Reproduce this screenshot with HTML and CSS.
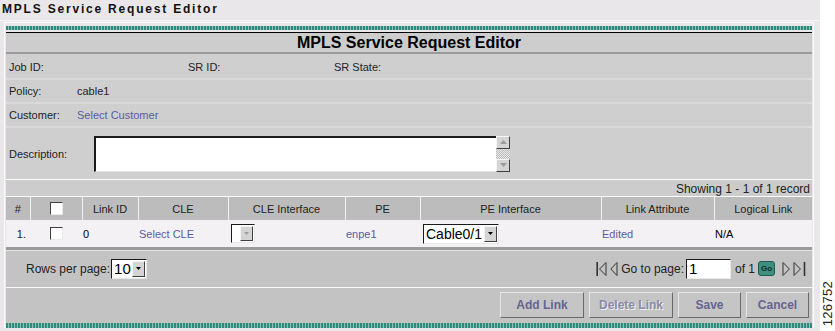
FILE: index.html
```html
<!DOCTYPE html>
<html lang="en">
  <head>
    <meta charset="UTF-8" />
    <title>MPLS Service Request Editor</title>
    <link rel="stylesheet" href="styles.css">
  </head>
  <body>
    <div class="screen">
      <div class="page-title">MPLS Service Request Editor</div>

      <div class="panel">
        <div class="band"></div>
        <div class="panel-head">MPLS Service Request Editor</div>

        <!-- request attributes -->
        <div class="info-row row-job">
          <span class="cell-job">Job ID:</span>
          <span class="cell-sr">SR ID:</span>
          <span class="cell-state">SR State:</span>
        </div>
        <div class="info-row">
          <span class="label">Policy:</span>
          <span>cable1</span>
        </div>
        <div class="info-row">
          <span class="label">Customer:</span>
          <a class="link" href="#">Select Customer</a>
        </div>
        <div class="info-row desc-row">
          <span class="label">Description:</span>
          <div class="textbox">
            <div class="textbox-area"></div>
            <div class="scrollbar">
              <span class="sb-btn">
                <svg width="7" height="4" viewBox="0 0 7 4"><path d="M3.5 0 7 4H0Z" fill="#9a9a9a"/></svg>
              </span>
              <span class="sb-track"></span>
              <span class="sb-btn">
                <svg width="7" height="4" viewBox="0 0 7 4"><path d="M0 0h7L3.5 4Z" fill="#9a9a9a"/></svg>
              </span>
            </div>
          </div>
        </div>

        <div class="showing">Showing 1 - 1 of 1 record</div>

        <!-- links grid -->
        <table class="grid">
          <colgroup>
            <col style="width:24px"><col style="width:52px"><col style="width:56px">
            <col style="width:90px"><col style="width:117px"><col style="width:75px">
            <col style="width:181px"><col style="width:113px"><col style="width:98px">
          </colgroup>
          <thead>
            <tr>
              <th>#</th>
              <th><span class="check"></span></th>
              <th>Link ID</th>
              <th>CLE</th>
              <th>CLE Interface</th>
              <th>PE</th>
              <th>PE Interface</th>
              <th>Link Attribute</th>
              <th>Logical Link</th>
            </tr>
          </thead>
          <tbody>
            <tr>
              <td class="num">1.</td>
              <td class="center"><span class="check"></span></td>
              <td class="plain">0</td>
              <td><a class="link" href="#">Select CLE</a></td>
              <td>
                <span class="select select-off">
                  <span class="select-value"></span>
                  <span class="select-btn"><svg width="5" height="3" viewBox="0 0 5 3"><path d="M0 0h5L2.5 3Z" fill="#a0a0a0"/></svg></span>
                </span>
              </td>
              <td><a class="link" href="#">enpe1</a></td>
              <td>
                <span class="select select-pe">
                  <span class="select-value">Cable0/1</span>
                  <span class="select-btn"><svg width="5" height="3" viewBox="0 0 5 3"><path d="M0 0h5L2.5 3Z" fill="#000"/></svg></span>
                </span>
              </td>
              <td><a class="link" href="#">Edited</a></td>
              <td class="plain">N/A</td>
            </tr>
          </tbody>
        </table>

        <div class="pager">
          <div class="rows-per">
            Rows per page:
            <span class="select select-rows">
              <span class="select-value">10</span>
              <span class="select-btn"><svg width="5" height="3" viewBox="0 0 5 3"><path d="M0 0h5L2.5 3Z" fill="#000"/></svg></span>
            </span>
          </div>
          <div class="nav">
            <svg class="nav-first" width="11" height="16" viewBox="0 0 11 16"><path d="M1.2 1v14" stroke="#333" stroke-width="1.6"/><path d="M10 1.5 3.6 8l6.4 6.5Z" fill="none" stroke="#333"/></svg>
            <svg class="nav-prev" width="8" height="16" viewBox="0 0 8 16"><path d="M7 1.5 0.8 8 7 14.5Z" fill="none" stroke="#333"/></svg>
            <span class="nav-label">Go to page:</span>
            <span class="page-input">1</span>
            <span class="nav-of">of 1</span>
            <span class="go">Go</span>
            <svg class="nav-next" width="9" height="16" viewBox="0 0 9 16"><path d="M1 1.5 7.4 8 1 14.5Z" fill="none" stroke="#333"/></svg>
            <svg width="14" height="16" viewBox="0 0 14 16"><path d="M1 1.5 7.4 8 1 14.5Z" fill="none" stroke="#333"/><path d="M11.5 1v14" stroke="#333" stroke-width="1.6"/></svg>
          </div>
        </div>

        <div class="actions">
          <button class="btn btn-add">Add Link</button>
          <button class="btn btn-off">Delete Link</button>
          <button class="btn btn-save">Save</button>
          <button class="btn btn-cancel">Cancel</button>
        </div>
        <div class="band band-bottom"></div>
      </div>
    </div>

    <div class="side">
      <span class="fig">126752</span>
    </div>
  </body>
</html>
```

FILE: styles.css
```css
body {
  margin: 0;
  display: flex;
  background: #ffffff;
  font-family: "Liberation Sans", Arial, sans-serif;
  font-size: 11px;
  color: #222;
}

.screen {
  width: 820px;
  height: 331px;
  background: #e9e7e9;
}

.page-title {
  height: 19px;
  padding: 1px 0 0 2px;
  font-size: 12px;
  font-weight: bold;
  letter-spacing: 1.8px;
  line-height: 17px;
  color: #111;
  border-bottom: 1px solid #f6f4f6;
}

.panel {
  margin: 1px 0 0 4px;
  width: 806px;
  padding: 3px 1px 0 1px;
  border: 1px solid #fbfbfb;
  border-bottom: none;
  background: #e9e7e9;
}

.band {
  height: 4px;
  background: repeating-linear-gradient(90deg, #2f8a7c 0 2px, #8ec3ba 2px 3px);
}

.band-bottom {
  height: 5px;
}

.panel-head {
  height: 19px;
  margin-top: 2px;
  border-top: 1px solid #000;
  border-bottom: 2px solid #9a9a9a;
  background: #cdcdcd;
  text-align: center;
  font-size: 16px;
  font-weight: bold;
  line-height: 20px;
  color: #000;
}

.info-row {
  display: flex;
  align-items: center;
  height: 22px;
  padding-left: 3px;
  background: #cfcfcf;
  border-bottom: 2px solid #dadada;
}

.row-job {
  height: 24px;
  align-items: flex-start;
  line-height: 26px;
}

.cell-job {
  width: 179px;
}

.cell-sr {
  width: 146px;
}

.label {
  width: 68px;
}

.link {
  color: #5a5aa6;
  text-decoration: none;
}

.desc-row {
  height: 51px;
  border-bottom: 1px solid #fbfbfb;
}

.desc-row .label {
  width: 85px;
}

.textbox {
  display: flex;
  height: 36px;
}

.textbox-area {
  width: 400px;
  background: #fff;
  border-top: 2px solid #1a1a1a;
  border-left: 2px solid #1a1a1a;
  border-bottom: 1px solid #e4e4e4;
}

.scrollbar {
  display: flex;
  flex-direction: column;
  width: 14px;
  background: repeating-conic-gradient(#bdbdbd 0 25%, #e6e6e6 0 50%) 0 0 / 2px 2px;
}

.sb-btn {
  display: flex;
  align-items: center;
  justify-content: center;
  height: 11px;
  background: #d4d4d4;
  border: 1px solid;
  border-color: #f6f6f6 #404040 #404040 #f6f6f6;
}

.sb-track {
  flex: 1;
}

.showing {
  height: 16px;
  padding-right: 2px;
  background: #cccccc;
  border-bottom: 1px solid #fbfbfb;
  text-align: right;
  font-size: 12px;
  line-height: 18px;
}

.grid {
  width: 806px;
  border-collapse: collapse;
  table-layout: fixed;
}

.grid th {
  height: 23px;
  padding: 0;
  background: #bcbcbc;
  border-left: 1px solid #f2f2f2;
  font-weight: normal;
  font-size: 11px;
  color: #222;
}

.grid th:first-child {
  border-left: none;
}

.grid td {
  height: 27px;
  padding: 0 0 0 1px;
  background: #f3f1f3;
}

.grid td.plain {
  color: #000;
}

.grid td.num {
  text-align: right;
  padding-right: 4px;
}

.grid td.center {
  text-align: center;
}

.check {
  display: inline-block;
  width: 11px;
  height: 11px;
  vertical-align: middle;
  background: #fff;
  border: 1px solid;
  border-color: #404040 #e8e8e8 #e8e8e8 #404040;
}

.select {
  display: inline-flex;
  align-items: stretch;
  vertical-align: middle;
  background: #fff;
  border: 1px solid;
  border-color: #1a1a1a #e8e8e8 #e8e8e8 #1a1a1a;
}

.select-value {
  padding: 0 2px;
  font-size: 15px;
  line-height: 18px;
  color: #000;
}

.select-btn {
  display: flex;
  align-items: center;
  justify-content: center;
  width: 11px;
  margin: 1px;
  background: #d4d4d4;
  border: 1px solid;
  border-color: #f6f6f6 #404040 #404040 #f6f6f6;
}

.select-off {
  height: 17px;
  margin-left: 2px;
}

.select-off .select-value {
  width: 3px;
}

.select-pe {
  margin-left: 2px;
}

.select-pe .select-value {
  width: 55px;
  font-size: 14px;
}

.pager {
  display: flex;
  justify-content: space-between;
  align-items: center;
  height: 37px;
  border-top: 3px solid #9b9b9b;
  border-bottom: 1px solid #fbfbfb;
  background: #c4c3c4;
  box-shadow: inset 0 1px 0 #e4e4e4;
}

.rows-per {
  display: flex;
  align-items: center;
  gap: 1px;
  padding-left: 20px;
  font-size: 12px;
}

.select-rows .select-value {
  width: 15px;
}

.nav {
  display: flex;
  align-items: center;
  padding-right: 5px;
  font-size: 12px;
}

.nav-first,
.nav-prev {
  margin-right: 3px;
}

.nav-label {
  margin-right: 2px;
}

.page-input {
  width: 41px;
  height: 18px;
  padding-left: 2px;
  margin-right: 4px;
  background: #fff;
  border: 1px solid;
  border-color: #1a1a1a #e8e8e8 #e8e8e8 #1a1a1a;
  font-size: 15px;
  line-height: 18px;
  color: #000;
}

.nav-of {
  margin-right: 3px;
}

.go {
  width: 15px;
  height: 13px;
  margin-right: 7px;
  border-radius: 3px;
  background: #3f8f7e;
  border: 1px solid #1f5a4e;
  color: #0f2d27;
  font-size: 8px;
  font-weight: bold;
  line-height: 13px;
  text-align: center;
}

.nav-next {
  margin-right: 2px;
}

.actions {
  display: flex;
  justify-content: flex-end;
  gap: 5px;
  height: 35px;
  padding: 4px 3px 0 0;
  box-sizing: border-box;
  background: #c4c3c4;
}

.btn {
  height: 26px;
  padding: 0;
  background: #c6c5c6;
  border: 1px solid;
  border-color: #e6e6e6 #6a6a6a #6a6a6a #e6e6e6;
  font-family: "Liberation Sans", Arial, sans-serif;
  font-size: 12px;
  font-weight: bold;
  color: #64648f;
}

.btn-add {
  width: 84px;
}

.btn-off {
  width: 84px;
  color: #8a8aa6;
  text-shadow: 1px 1px 0 #f2f2f2;
}

.btn-save {
  width: 63px;
}

.btn-cancel {
  width: 63px;
}

.side {
  display: flex;
  align-items: flex-end;
  width: 15px;
  height: 331px;
  background: #fff;
}

.fig {
  margin-bottom: 5px;
  writing-mode: vertical-rl;
  transform: rotate(180deg);
  font-size: 13px;
  letter-spacing: 0.3px;
  color: #222;
}
```
